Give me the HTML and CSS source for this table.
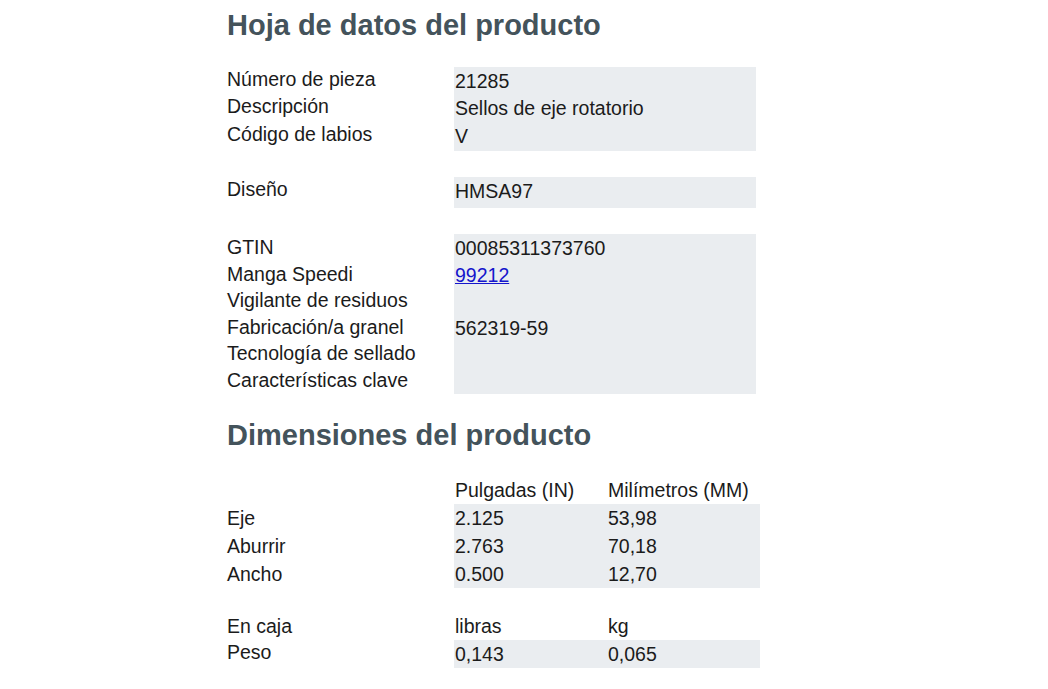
FILE: index.html
```html
<!DOCTYPE html>
<html lang="es">
<head>
<meta charset="utf-8">
<title>Hoja de datos del producto</title>
<link rel="stylesheet" href="styles.css">
</head>
<body>
<main class="sheet">
  <h1 class="title">Hoja de datos del producto</h1>

  <section class="group group-1">
    <div class="labels">
      <div>Número de pieza</div>
      <div>Descripción</div>
      <div>Código de labios</div>
    </div>
    <div class="values">
      <div>21285</div>
      <div>Sellos de eje rotatorio</div>
      <div>V</div>
    </div>
  </section>

  <section class="group group-2">
    <div class="labels">
      <div>Diseño</div>
    </div>
    <div class="values">
      <div>HMSA97</div>
    </div>
  </section>

  <section class="group group-3">
    <div class="labels">
      <div>GTIN</div>
      <div>Manga Speedi</div>
      <div>Vigilante de residuos</div>
      <div>Fabricación/a granel</div>
      <div>Tecnología de sellado</div>
      <div>Características clave</div>
    </div>
    <div class="values">
      <div>00085311373760</div>
      <div><a href="#" class="link">99212</a></div>
      <div>&nbsp;</div>
      <div>562319-59</div>
      <div>&nbsp;</div>
      <div>&nbsp;</div>
    </div>
  </section>

  <h2 class="title title-2">Dimensiones del producto</h2>

  <section class="dims">
    <div class="dim-row">
      <div class="dim-label"></div>
      <div class="dim-cell">Pulgadas (IN)</div>
      <div class="dim-cell">Milímetros (MM)</div>
    </div>
    <div class="dim-row shaded">
      <div class="dim-label">Eje</div>
      <div class="dim-cell">2.125</div>
      <div class="dim-cell">53,98</div>
    </div>
    <div class="dim-row shaded">
      <div class="dim-label">Aburrir</div>
      <div class="dim-cell">2.763</div>
      <div class="dim-cell">70,18</div>
    </div>
    <div class="dim-row shaded">
      <div class="dim-label">Ancho</div>
      <div class="dim-cell">0.500</div>
      <div class="dim-cell">12,70</div>
    </div>
  </section>

  <section class="dims dims-weight">
    <div class="dim-row">
      <div class="dim-label">En caja</div>
      <div class="dim-cell">libras</div>
      <div class="dim-cell">kg</div>
    </div>
    <div class="dim-row shaded">
      <div class="dim-label dim-label-up">Peso</div>
      <div class="dim-cell">0,143</div>
      <div class="dim-cell">0,065</div>
    </div>
  </section>
</main>
</body>
</html>
```

FILE: styles.css
```css
html, body {
  margin: 0;
  padding: 0;
  background: #ffffff;
}

body {
  font-family: "Liberation Sans", Arial, sans-serif;
  font-size: 19.5px;
  color: #1b1b1b;
}

.sheet {
  padding: 0 0 0 227px;
  width: 540px;
}

.title {
  margin: 0;
  font-size: 29px;
  font-weight: bold;
  color: #44535b;
  line-height: 36px;
  padding-top: 7px;
  height: 36px;
}

.group {
  display: flex;
  align-items: flex-start;
}

.labels {
  width: 227px;
  flex: none;
}

.values {
  width: 302px;
  flex: none;
  background: #eaedf0;
  padding-left: 1px;
  box-sizing: border-box;
}

.group-1 {
  margin-top: 24px;
}
.group-1 .labels {
  line-height: 27.4px;
  margin-top: -1px;
}
.group-1 .values {
  line-height: 27.4px;
  padding-top: 1px;
  height: 84px;
}

.group-2 {
  margin-top: 26px;
}
.group-2 .labels {
  line-height: 27px;
  margin-top: -1px;
}
.group-2 .values {
  line-height: 27px;
  padding-top: 1px;
  height: 31px;
}

.group-3 {
  margin-top: 26px;
}
.group-3 .labels {
  line-height: 26.6px;
}
.group-3 .values {
  line-height: 26.6px;
  padding-top: 1px;
  height: 160px;
}

.link {
  color: #1515cc;
  text-decoration: underline;
}

.title-2 {
  padding-top: 23px;
}

.dims {
  margin-top: 23px;
  width: 533px;
}

.dim-row {
  display: flex;
  line-height: 28px;
  height: 28px;
}

.dim-label {
  width: 227px;
  flex: none;
  background: #ffffff;
}

.dim-cell {
  width: 153px;
  flex: none;
  padding-left: 1px;
  box-sizing: border-box;
}

.dim-row.shaded .dim-cell {
  background: #eaedf0;
}

.dims-weight {
  margin-top: 24px;
}

.dim-label-up {
  line-height: 24px;
}
```
